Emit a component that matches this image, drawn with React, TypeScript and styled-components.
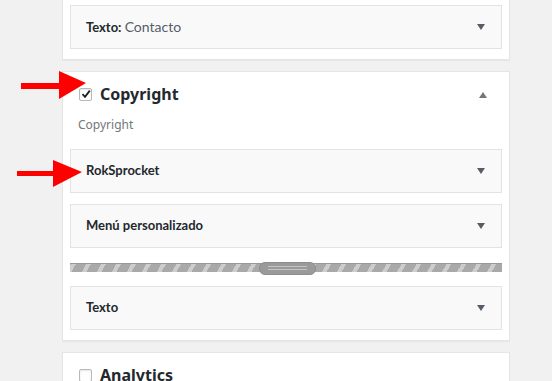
import React from "react";
import styled, { createGlobalStyle } from "styled-components";

const Global = createGlobalStyle`
  html, body { margin: 0; padding: 0; background: #f1f1f1; }
  body { font-family: "Noto Sans", "Open Sans", sans-serif; color: #23282d; overflow: hidden; }
`;

const Page = styled.div`
  position: relative;
  width: 552px;
  height: 381px;
  overflow: hidden;
  box-sizing: border-box;
  padding-left: 62px;
`;

const Column = styled.div`
  width: 448px;
  display: flex;
  flex-direction: column;
  gap: 11px;
`;

const Card = styled.div<{ $cut?: boolean }>`
  box-sizing: border-box;
  background: #fff;
  border: 1px solid #e5e5e5;
  border-top: ${(p) => (p.$cut ? "none" : "1px solid #e5e5e5")};
  box-shadow: 0 1px 1px rgba(0, 0, 0, 0.04);
  padding: ${(p) => (p.$cut ? "5px 7px 10px" : "10px 7px 10px")};
  display: flex;
  flex-direction: column;
`;

const Header = styled.div`
  height: 24px;
  display: flex;
  align-items: center;
  padding: 0 15px 0 9px;
`;

const Check = styled.span<{ $on?: boolean }>`
  box-sizing: border-box;
  width: 13px;
  height: 13px;
  border: 1px solid #b4b9be;
  border-radius: 2px;
  background: #fff;
  box-shadow: inset 0 1px 2px rgba(0, 0, 0, 0.1);
  display: inline-flex;
  align-items: center;
  justify-content: center;
  margin-right: 8px;
`;

const Title = styled.span`
  font-size: 16px;
  font-weight: 700;
  color: #23282d;
  flex: 1;
`;

const Desc = styled.div`
  margin-top: 10px;
  padding-left: 8px;
  font-size: 12px;
  line-height: 18px;
  color: #72777c;
`;

const List = styled.div<{ $mt?: number }>`
  margin-top: ${(p) => p.$mt ?? 0}px;
  display: flex;
  flex-direction: column;
  gap: 11px;
`;

const Item = styled.div<{ $mt?: number }>`
  box-sizing: border-box;
  height: 44px;
  margin-top: ${(p) => p.$mt ?? 0}px;
  background: #f9f9f9;
  border: 1px solid #e3e3e3;
  display: flex;
  align-items: center;
  padding: 0 16px 2px 15px;
  font-family: Lato, "Noto Sans", sans-serif;
  font-size: 13px;
  font-weight: 700;
  color: #23282d;
`;

const ItemLabel = styled.span`
  flex: 1;
`;

const Sub = styled.span`
  font-size: 14px;
  font-weight: 400;
  color: #555d66;
`;

const Caret = styled.span<{ $up?: boolean }>`
  width: 0;
  height: 0;
  margin-top: 1px;
  border-left: 4px solid transparent;
  border-right: 4px solid transparent;
  ${(p) =>
    p.$up
      ? "border-bottom: 6px solid #72777c;"
      : "border-top: 6px solid #555d66;"}
`;

const Stripe = styled.div`
  position: relative;
  margin-top: 15px;
  height: 9px;
  box-sizing: border-box;
  border-top: 1px solid #999;
  background: repeating-linear-gradient(
    -60deg,
    #a9a9a9 0px,
    #a9a9a9 9px,
    #cdcdcd 9px,
    #cdcdcd 13px
  );
  display: flex;
  justify-content: center;
  align-items: center;
`;

const Handle = styled.div`
  width: 57px;
  height: 13px;
  box-sizing: border-box;
  border-radius: 6px;
  background: #9a9a9a;
  border: 1px solid #8e8e8e;
  display: flex;
  flex-direction: column;
  justify-content: center;
  gap: 2px;
  padding: 0 8px;
  margin-left: 2px;
`;

const Line = styled.div`
  height: 1px;
  background: #c4c4c4;
`;

const Overlay = styled.svg`
  position: absolute;
  left: 0;
  top: 0;
  pointer-events: none;
`;

const Tick = () => (
  <svg width="10" height="10" viewBox="0 0 10 10">
    <path d="M1.5 5.2 L4 7.8 L8.8 1.6" fill="none" stroke="#1e1e1e" strokeWidth="1.8" />
  </svg>
);

export default function App() {
  return (
    <>
      <Global />
      <Page>
        <Column>
          <Card $cut>
            <Item>
              <ItemLabel>
                Texto: <Sub>Contacto</Sub>
              </ItemLabel>
              <Caret />
            </Item>
          </Card>
          <Card>
            <Header>
              <Check $on>
                <Tick />
              </Check>
              <Title>Copyright</Title>
              <Caret $up />
            </Header>
            <Desc>Copyright</Desc>
            <List $mt={15}>
              <Item>
                <ItemLabel>RokSprocket</ItemLabel>
                <Caret />
              </Item>
              <Item>
                <ItemLabel>Menú personalizado</ItemLabel>
                <Caret />
              </Item>
            </List>
            <Stripe>
              <Handle>
                <Line />
                <Line />
              </Handle>
            </Stripe>
            <Item $mt={14}>
              <ItemLabel>Texto</ItemLabel>
              <Caret />
            </Item>
          </Card>
          <Card>
            <Header>
              <Check />
              <Title>Analytics</Title>
            </Header>
          </Card>
        </Column>
        <Overlay width="552" height="381" viewBox="0 0 552 381">
          <rect x="21" y="83" width="40" height="6" fill="#f00" />
          <polygon points="59,71 86,83 59,99" fill="#f00" />
          <rect x="17" y="171" width="38" height="5" fill="#f00" />
          <polygon points="53,160 82,172 53,187" fill="#f00" />
        </Overlay>
      </Page>
    </>
  );
}
